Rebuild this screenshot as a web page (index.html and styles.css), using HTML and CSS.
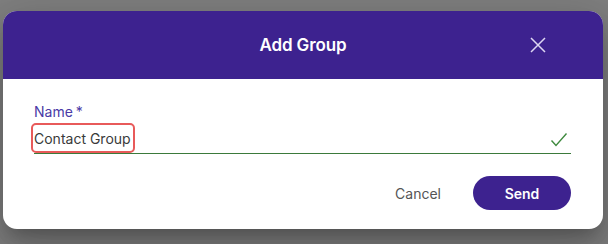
FILE: index.html
```html
<!DOCTYPE html>
<html>
<head>
<meta charset="utf-8">
<link rel="stylesheet" href="styles.css">
</head>
<body>
<div class="backdrop">
  <div class="dialog">
    <div class="header">
      <span class="title">Add Group</span>
      <button class="close" aria-label="Close">
        <svg width="16" height="16" viewBox="0 0 16 16"><path d="M1 1 L15 15 M15 1 L1 15" stroke="#ddd6f2" stroke-width="1.5" fill="none"/></svg>
      </button>
    </div>
    <div class="body">
      <label class="label">Name<span class="req">*</span></label>
      <div class="field">
        <span class="value">Contact Group</span>
        <svg class="check" width="18" height="16" viewBox="0 0 18 16"><path d="M1.5 8.5 L6 13.5 L16.5 1.5" stroke="#3f8a3f" stroke-width="1.4" fill="none"/></svg>
      </div>
    </div>
    <div class="actions">
      <button class="cancel">Cancel</button>
      <button class="send">Send</button>
    </div>
  </div>
</div>
</body>
</html>
```

FILE: styles.css
```css
html, body {
  margin: 0;
  padding: 0;
  background: #7f7f7f;
  height: 244px;
  overflow: hidden;
  font-family: Inter, "Noto Sans", sans-serif;
}
.backdrop {
  padding: 11px 5px 0 3px;
}
.dialog {
  width: 600px;
  height: 218px;
  background: #fff;
  border-radius: 14px;
  overflow: hidden;
  box-shadow: 0 11px 15px -7px rgba(0,0,0,.2), 0 24px 38px 3px rgba(0,0,0,.14), 0 9px 46px 8px rgba(0,0,0,.12);
  display: flex;
  flex-direction: column;
}
.header {
  height: 68px;
  background: #3d228f;
  display: flex;
  align-items: center;
  justify-content: center;
  position: relative;
}
.title {
  color: #fff;
  font-size: 17px;
  font-weight: 600;
  letter-spacing: -0.1px;
}
.close {
  position: absolute;
  left: 527px;
  top: 26px;
  width: 16px;
  height: 16px;
  padding: 0;
  border: 0;
  background: none;
  display: flex;
}
.body {
  padding: 24px 32px 0 31px;
  display: flex;
  flex-direction: column;
}
.label {
  color: #4a3aa6;
  font-size: 14px;
  line-height: 17px;
}
.req {
  margin-left: 3px;
}
.field {
  margin-top: 4px;
  height: 29px;
  border-bottom: 1px solid #3b7a3b;
  display: flex;
  align-items: center;
  justify-content: space-between;
}
.value {
  font-size: 14px;
  line-height: 17px;
  color: #3a3a3a;
  outline: 2px solid #e85a5a;
  outline-offset: 0;
  border-radius: 3px;
  padding: 5px 2px 4px 1px;
  margin-left: -1px;
  margin-top: -1px;
}
.check {
  margin-right: 3px;
  margin-top: 2px;
}
.actions {
  display: flex;
  justify-content: flex-end;
  align-items: center;
  gap: 32px;
  padding: 22px 32px 0 0;
}
.cancel {
  border: 0;
  background: none;
  font-family: inherit;
  font-size: 14px;
  color: #555;
  padding: 0;
}
.send {
  width: 98px;
  height: 34px;
  border: 0;
  border-radius: 17px;
  background: #3d228f;
  color: #fff;
  font-family: inherit;
  font-size: 14px;
  font-weight: 600;
}
```
